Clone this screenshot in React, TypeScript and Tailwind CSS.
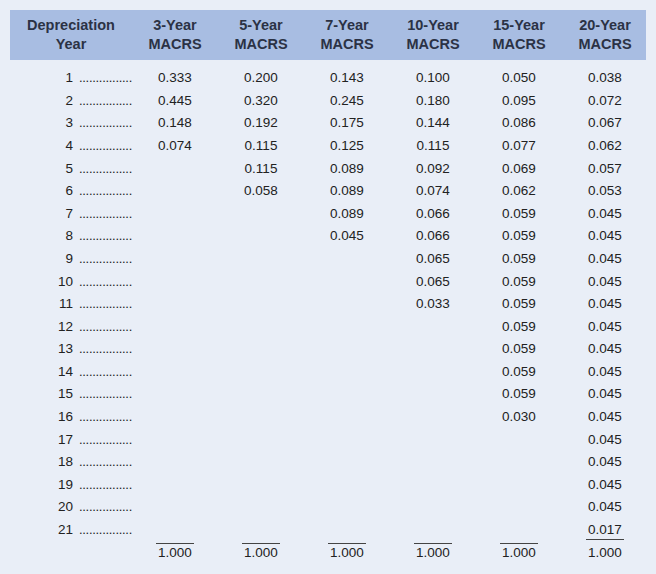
const cols: (string | null)[][] = [
  ["0.333","0.445","0.148","0.074"],
  ["0.200","0.320","0.192","0.115","0.115","0.058"],
  ["0.143","0.245","0.175","0.125","0.089","0.089","0.089","0.045"],
  ["0.100","0.180","0.144","0.115","0.092","0.074","0.066","0.066","0.065","0.065","0.033"],
  ["0.050","0.095","0.086","0.077","0.069","0.062","0.059","0.059","0.059","0.059","0.059","0.059","0.059","0.059","0.059","0.030"],
  ["0.038","0.072","0.067","0.062","0.057","0.053","0.045","0.045","0.045","0.045","0.045","0.045","0.045","0.045","0.045","0.045","0.045","0.045","0.045","0.045","0.017"],
];
const heads = ["3-Year","5-Year","7-Year","10-Year","15-Year","20-Year"];
const grid = "grid grid-cols-[122px_86px_86px_86px_86px_86px_86px]";

export default function App() {
  return (
    <div className="w-[656px] h-[574px] bg-[#e9eef7] pt-[10px] px-[10px] text-[#222]" style={{ fontFamily: '"Liberation Sans", Arial, sans-serif' }}>
      <div className={`${grid} h-[50px] bg-[#a8bde2] items-center text-[14.5px] font-bold leading-[19px] text-[#2b3245] text-center`}>
        <div>Depreciation<br />Year</div>
        {heads.map(h => <div key={h}>{h}<br />MACRS</div>)}
      </div>
      <div className="mt-[7px] text-[13.5px]">
        {Array.from({ length: 21 }, (_, i) => (
          <div key={i} className={`${grid} h-[22.6px] items-center`}>
            <div className="flex whitespace-nowrap">
              <span className="w-[68px] text-right">{i + 1}</span>
              <span className="ml-[6px] text-[13px] tracking-[-0.3px]">................</span>
            </div>
            {cols.map((c, j) => (
              <div key={j} className="text-center">
                {c[i] ? (
                  <span className={j === 5 && i === 20 ? "inline-block border-b border-[#444] leading-[18px] px-[2px]" : ""}>{c[i]}</span>
                ) : null}
              </div>
            ))}
          </div>
        ))}
        <div className={`${grid} h-[22.6px] items-center`}>
          <div />
          {cols.map((_, j) => (
            <div key={j} className="text-center">
              <span className={j === 5 ? "inline-block leading-[18px] px-[2px]" : "inline-block border-t border-[#444] leading-[18px] px-[2px]"}>1.000</span>
            </div>
          ))}
        </div>
      </div>
    </div>
  );
}
